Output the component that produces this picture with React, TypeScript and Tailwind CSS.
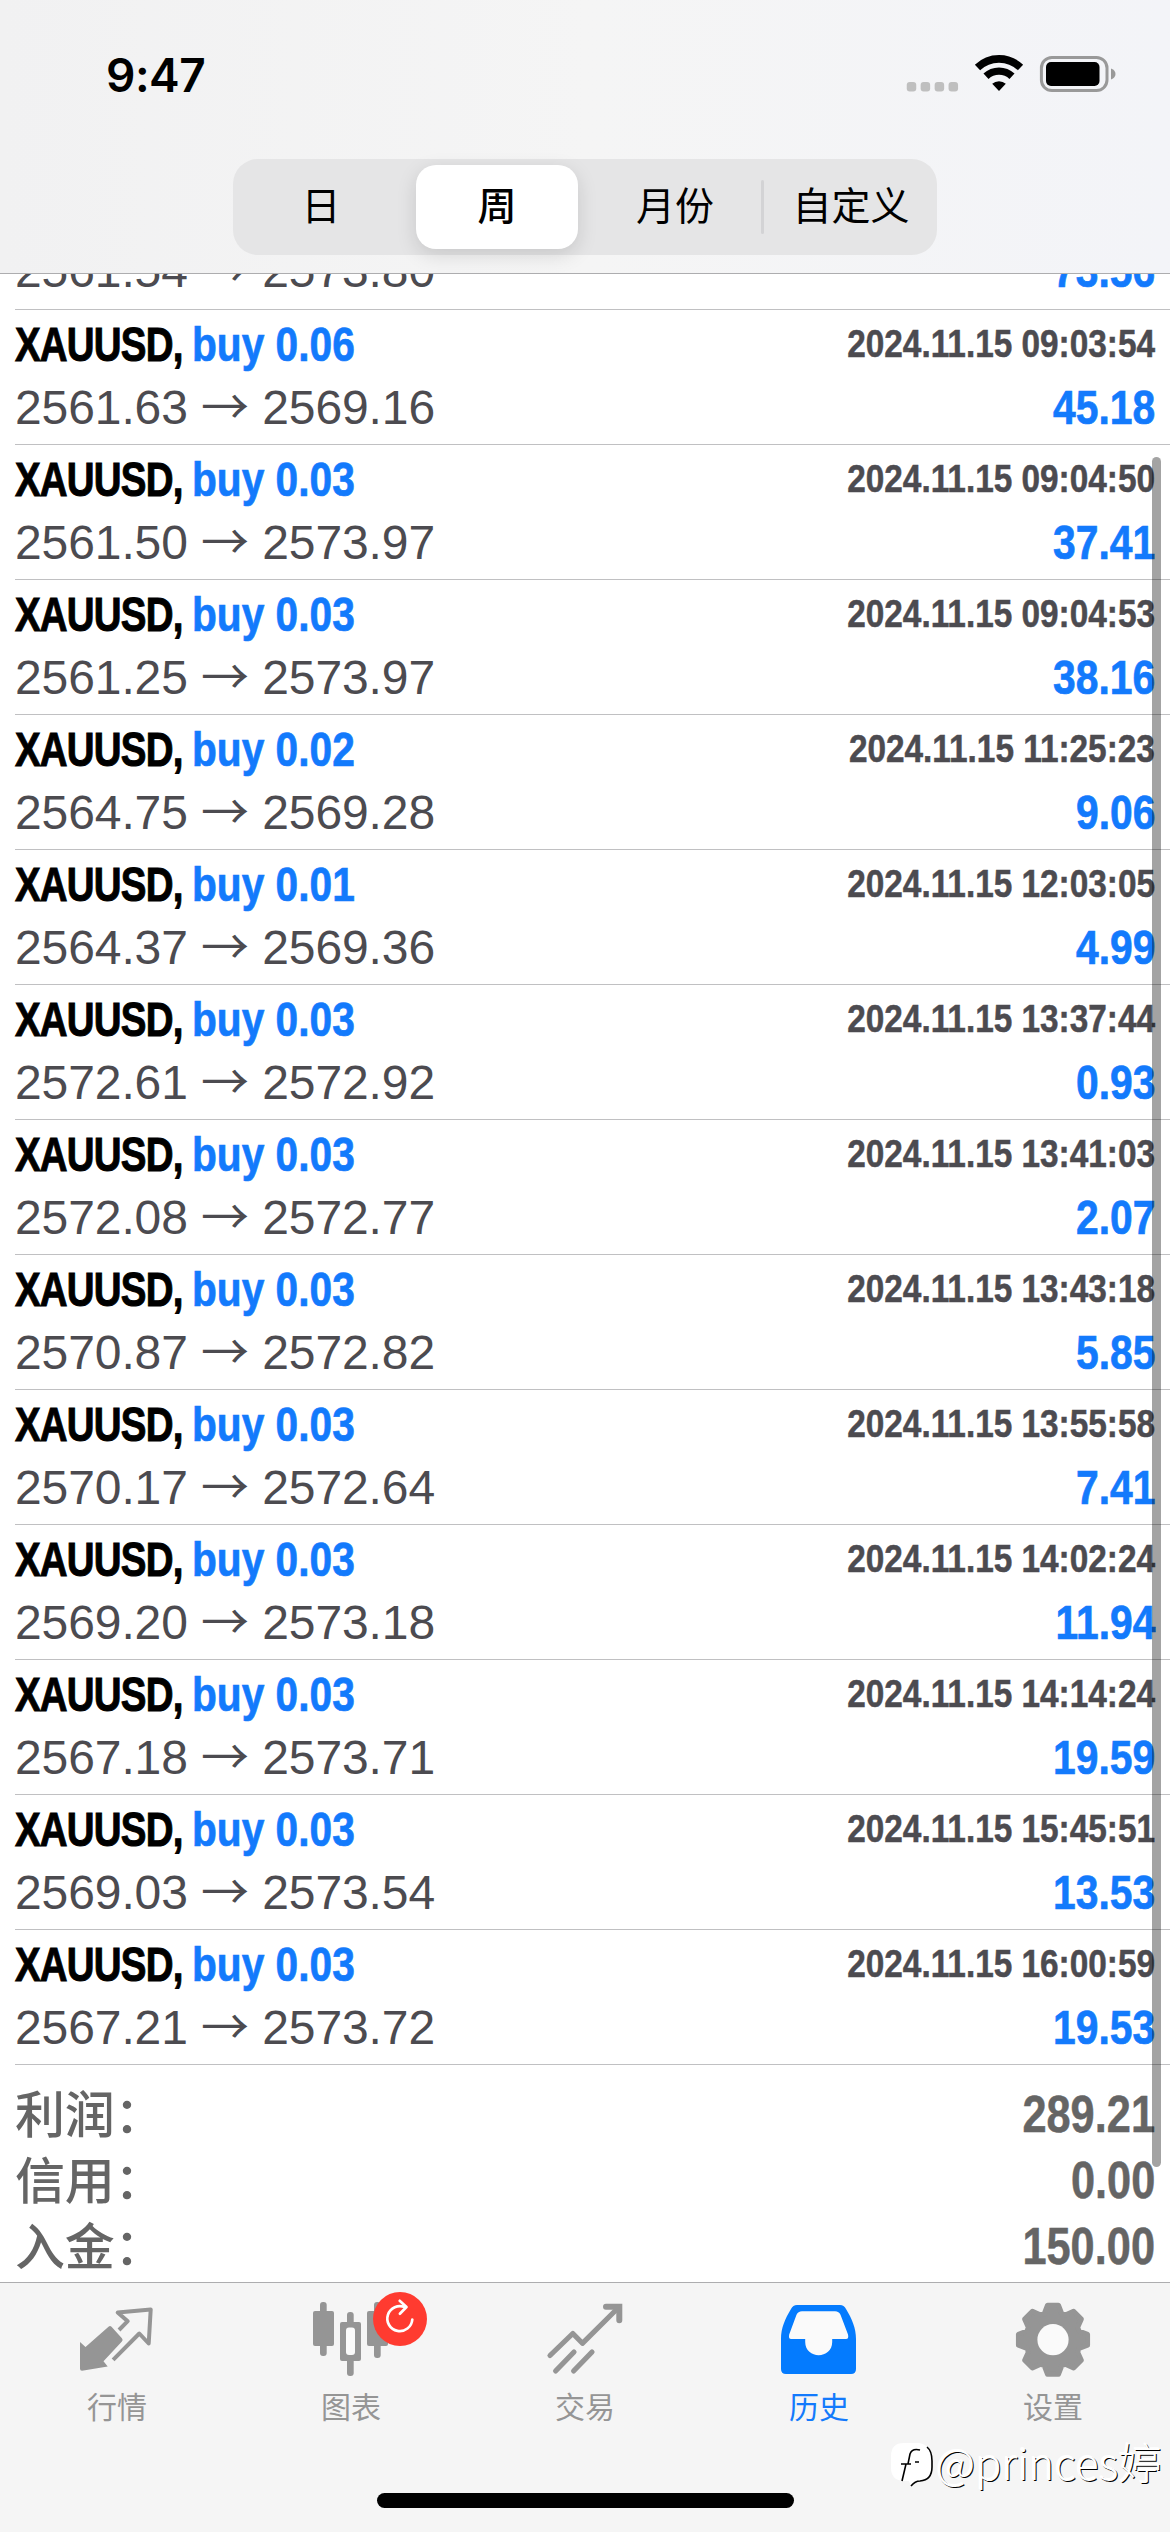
import type { ReactNode } from 'react';
import clsx from 'clsx';

interface Deal {
  volume: string;
  open: string;
  close: string;
  time: string;
  profit: string;
}

const deals: Deal[] = [
  { volume: '0.06', open: '2561.63', close: '2569.16', time: '2024.11.15 09:03:54', profit: '45.18' },
  { volume: '0.03', open: '2561.50', close: '2573.97', time: '2024.11.15 09:04:50', profit: '37.41' },
  { volume: '0.03', open: '2561.25', close: '2573.97', time: '2024.11.15 09:04:53', profit: '38.16' },
  { volume: '0.02', open: '2564.75', close: '2569.28', time: '2024.11.15 11:25:23', profit: '9.06' },
  { volume: '0.01', open: '2564.37', close: '2569.36', time: '2024.11.15 12:03:05', profit: '4.99' },
  { volume: '0.03', open: '2572.61', close: '2572.92', time: '2024.11.15 13:37:44', profit: '0.93' },
  { volume: '0.03', open: '2572.08', close: '2572.77', time: '2024.11.15 13:41:03', profit: '2.07' },
  { volume: '0.03', open: '2570.87', close: '2572.82', time: '2024.11.15 13:43:18', profit: '5.85' },
  { volume: '0.03', open: '2570.17', close: '2572.64', time: '2024.11.15 13:55:58', profit: '7.41' },
  { volume: '0.03', open: '2569.20', close: '2573.18', time: '2024.11.15 14:02:24', profit: '11.94' },
  { volume: '0.03', open: '2567.18', close: '2573.71', time: '2024.11.15 14:14:24', profit: '19.59' },
  { volume: '0.03', open: '2569.03', close: '2573.54', time: '2024.11.15 15:45:51', profit: '13.53' },
  { volume: '0.03', open: '2567.21', close: '2573.72', time: '2024.11.15 16:00:59', profit: '19.53' },
];

const totals = [
  { label: '利润：', value: '289.21' },
  { label: '信用：', value: '0.00' },
  { label: '入金：', value: '150.00' },
];

const periods = ['日', '周', '月份', '自定义'];

function StatusBar() {
  return (
    <div className="flex h-[159px] justify-between pl-[106px] pr-[54px] pt-[45px]">
      <span className="font-['Inter'] text-[46px] leading-[60px] font-semibold tracking-[-0.5px] text-black">9:47</span>
      <svg className="h-[60px] w-[216px]" viewBox="900 45 216 60">
        {[911.5, 925.4, 939.4, 953.3].map((x) => (
          <rect key={x} x={x - 4.75} y="82" width="9.5" height="9.5" rx="3" fill="#bfbfbf" />
        ))}
        <path d="M977.5 67.5a31 31 0 0 1 43 0" fill="none" stroke="#000" strokeWidth="7.6" />
        <path d="M986 76.3a19 19 0 0 1 26 0" fill="none" stroke="#000" strokeWidth="7.4" />
        <path d="M999 91l-6.8-7.2a10 10 0 0 1 13.6 0z" fill="#000" />
        <rect x="1041.4" y="57.4" width="65.6" height="33.2" rx="10.5" fill="none" stroke="#999" strokeWidth="3" />
        <rect x="1046" y="62" width="53.5" height="24" rx="5" fill="#000" />
        <path d="M1111 68.5c6 2 6 9 0 11z" fill="#999" />
      </svg>
    </div>
  );
}

function PeriodPicker() {
  return (
    <div className="mx-auto flex h-24 w-[704px] rounded-[25px] bg-[#e5e5e6] py-[6px]">
      {periods.map((p, i) => (
        <div
          key={p}
          className={clsx(
            'relative flex items-center justify-center text-[39px] leading-[50px] text-black',
            i === 1 ? 'mx-[7px] w-[162px] rounded-[20px] bg-white font-medium shadow-[0_6px_20px_rgba(0,0,0,0.13)]' : 'w-[176px]',
          )}
        >
          <span className={clsx(i > 1 && 'translate-x-[2px]')}>{p}</span>
          {i === 3 && <i className="absolute left-0 top-[15px] h-[54px] w-[3px] rounded bg-[#d3d3d5]" />}
        </div>
      ))}
    </div>
  );
}

function Prices({ open, close, profit }: { open: string; close: string; profit: string }) {
  return (
    <div className="flex shrink-0 justify-between text-[48px] leading-[54px] whitespace-nowrap">
      <span className="-translate-y-[2px] tracking-[-0.1px] text-[#4c4b50]">
        {open} <span className="font-['Noto_Sans_CJK_SC'] leading-none">→</span> {close}
      </span>
      <span className="origin-right scale-x-[0.85] font-bold text-[#137afc] [-webkit-text-stroke:0.7px]">{profit}</span>
    </div>
  );
}

function DealRow({ deal }: { deal: Deal }) {
  return (
    <div className="ml-[15px] h-[135px] border-b border-[#c0c0c2] pr-[15px]">
      <div className="flex h-[71px] items-start justify-between pt-[7px] font-bold whitespace-nowrap">
        <div className="flex text-[49px] leading-[54px]">
          <span className="w-[177px] origin-left scale-x-[0.785] tracking-[-1px] text-black [-webkit-text-stroke:1px]">XAUUSD,</span>
          <span className="origin-left scale-x-[0.83] text-[#137afc] [-webkit-text-stroke:0.7px]">buy {deal.volume}</span>
        </div>
        <span className="origin-right scale-x-[0.855] text-[39px] leading-[54px] text-[#4c4b50] [-webkit-text-stroke:0.5px]">{deal.time}</span>
      </div>
      <Prices open={deal.open} close={deal.close} profit={deal.profit} />
    </div>
  );
}

function QuotesIcon() {
  return (
    <svg className="h-[92px] w-[90px]" viewBox="72 2288 90 92">
      <path d="M80 2342l5.5 5L108.5 2326.7q1.5-1.5 3 0L121.9 2338.3q1.5 1.7 0 3.2L103.5 2361.3l4.2 5.2L82 2370.7q-2 0-2-2z" fill="#959595" />
      <path d="M119 2330l8.7-8.8-10-8.7 33-3-2 34-9.4-10-26.2 26.3" fill="none" stroke="#959595" strokeWidth="4" strokeLinejoin="round" />
    </svg>
  );
}

function ChartIcon() {
  return (
    <svg className="h-[92px] w-[110px] translate-x-[10px]" viewBox="306 2288 110 92">
      <g fill="#959595">
        <rect x="313" y="2311" width="21" height="35" rx="2" />
        <rect x="320" y="2302" width="6.7" height="54" rx="3" />
        <rect x="340" y="2322" width="21" height="39" rx="2" />
        <rect x="347" y="2312" width="6.7" height="64" rx="3" />
        <rect x="367" y="2311" width="21" height="35" rx="2" />
        <rect x="374" y="2302" width="6.7" height="56" rx="3" />
      </g>
      <rect x="346" y="2327.5" width="9" height="27.5" rx="3" fill="#fafafa" />
    </svg>
  );
}

function TradeIcon() {
  return (
    <svg className="h-[92px] w-[90px]" viewBox="540 2288 90 92">
      <g fill="none" stroke="#959595" strokeWidth="5.2" strokeLinecap="round">
        <path d="M550 2355.5L572.8 2333.5l9.6 9.8L618 2308" strokeLinejoin="round" />
        <path d="M606 2306.8h13.3v13.5" strokeWidth="6" />
        <path d="M555.6 2371L574 2352M573.6 2371L592 2352" />
      </g>
    </svg>
  );
}

function HistoryIcon() {
  return (
    <svg className="h-[92px] w-[90px]" viewBox="774 2288 90 92">
      <path d="M797 2305h43q4 0 6 4c6 10 10 19 10 30v30q0 5-5 5h-65q-5 0-5-5v-30c0-11 4-20 10-30q2-4 6-4z" fill="#047bfe" />
      <path d="M802 2311.3h33q4 0 5.500 3.500L848 2334.500q1 4.500-2 4.500h-13.800v3c0 17.500-27 17.500-27 0v-3H791.200q-3 0-2-4.500l7.300-19.700q1.500-3.500 5.500-3.500z" fill="#fafafa" />
    </svg>
  );
}

// eight rounded teeth around the hub
const gearPoints = Array.from({ length: 8 }, (_, i) => i * 45)
  .flatMap((a) => [
    [a - 18.5, 27.5],
    [a - 9, 35],
    [a + 9, 35],
    [a + 18.5, 27.5],
  ])
  .map(([a, r]) => {
    const t = (a * Math.PI) / 180;
    return `${(45 + r * Math.cos(t)).toFixed(2)},${(51.7 + r * Math.sin(t)).toFixed(2)}`;
  })
  .join(' ');

function SettingsIcon() {
  return (
    <svg className="h-[92px] w-[90px]" viewBox="0 0 90 92">
      <polygon points={gearPoints} fill="#959595" stroke="#959595" strokeWidth="5" strokeLinejoin="round" />
      <circle cx="45" cy="51.7" r="15.6" fill="#fafafa" />
    </svg>
  );
}

function UpdateBadge() {
  return (
    <svg className="absolute left-[139px] top-[9px] h-[54px] w-[54px]" viewBox="0 0 54 54">
      <circle cx="27" cy="27" r="27" fill="#ff3b30" />
      <g fill="none" stroke="#fff" strokeWidth="2.7" strokeLinecap="round" strokeLinejoin="round">
        <path d="M39.3 27.5A12.5 12.5 0 1 1 32 15.2" />
        <path d="M26.7 8.8l6.8 6.2-6.6 6.8" />
      </g>
    </svg>
  );
}

function Tab({ icon, label, active, children }: { icon: ReactNode; label: string; active?: boolean; children?: ReactNode }) {
  return (
    <div className="relative flex w-[234px] flex-col items-center pt-[5px]">
      {icon}
      <span className={clsx('mt-[11px] text-[30px] leading-[34px]', active ? 'text-[#137afc]' : 'text-[#959595]')}>{label}</span>
      {children}
    </div>
  );
}

function Watermark() {
  return (
    <div className="absolute left-[891px] top-[2431px] flex items-center whitespace-nowrap text-white">
      <svg className="mt-[10px] h-[48px] w-[44px]" viewBox="0 0 44 48">
        <path d="M13 1h15q12 2 12 16v8q0 12-10 13-6 0-10 6l-2-5h-6Q0 38 0 26V14Q0 1 13 1z" fill="#fff" />
        <path d="M36 5q5 4 5 14v6q0 13-12 14-5 0-9 5" fill="none" stroke="#000" strokeWidth="1.6" />
        <path d="M29 8q-8-2-10 4l-2 10h-7M17 22h-2l-4 17M17 22h3M24 20h4" fill="none" stroke="#000" strokeWidth="1.6" />
      </svg>
      <span className="ml-px font-['Noto_Sans_CJK_SC'] text-[43px] leading-[60px] font-light tracking-[0.3px] [text-shadow:1px_1px_0_#000,-1px_-1px_0_#fff]">
        @princes婷
      </span>
    </div>
  );
}

export default function App() {
  return (
    <div className="relative flex h-[2532px] w-[1170px] flex-col overflow-hidden bg-white font-['Liberation_Sans','Noto_Sans_CJK_SC',sans-serif]">
      <header className="h-[274px] shrink-0 border-b border-[#adadaf] bg-linear-to-r from-[#f1f1f2] via-[#f5f5f5] to-[#f3f4f8]">
        <StatusBar />
        <PeriodPicker />
      </header>

      <main className="h-[2008px] shrink-0">
        {/* row scrolled halfway under the header */}
        <div className="ml-[15px] flex h-[36px] flex-col justify-end overflow-hidden border-b border-[#c0c0c2] pr-[15px] pb-[9px]">
          <Prices open="2561.54" close="2573.80" profit="73.56" />
        </div>
        {deals.map((deal) => (
          <DealRow key={deal.time} deal={deal} />
        ))}
        <div className="pl-[15px] pr-[15px] pt-[17px] text-[51px] text-[#656565]">
          {totals.map((t) => (
            <div key={t.label} className="flex h-[66px] items-center justify-between">
              <span className="-translate-y-[4px] font-['Noto_Sans_CJK_SC'] text-[50px] leading-[60px] font-medium tracking-[-0.3px]">{t.label}</span>
              <span className="origin-right scale-x-[0.85] leading-[60px] font-bold [-webkit-text-stroke:0.5px]">{t.value}</span>
            </div>
          ))}
        </div>
      </main>

      <footer className="flex flex-1 flex-col justify-between border-t border-[#adadaf] bg-[#f5f5f5]">
        <nav className="flex">
          <Tab icon={<QuotesIcon />} label="行情" />
          <Tab icon={<ChartIcon />} label="图表">
            <UpdateBadge />
          </Tab>
          <Tab icon={<TradeIcon />} label="交易" />
          <Tab icon={<HistoryIcon />} label="历史" active />
          <Tab icon={<SettingsIcon />} label="设置" />
        </nav>
        <div className="mx-auto mb-6 h-[15px] w-[417px] rounded-full bg-black" />
      </footer>

      <div className="absolute left-[1152px] top-[457px] h-[1710px] w-[9px] rounded-full bg-black/36" />
      <Watermark />
    </div>
  );
}
